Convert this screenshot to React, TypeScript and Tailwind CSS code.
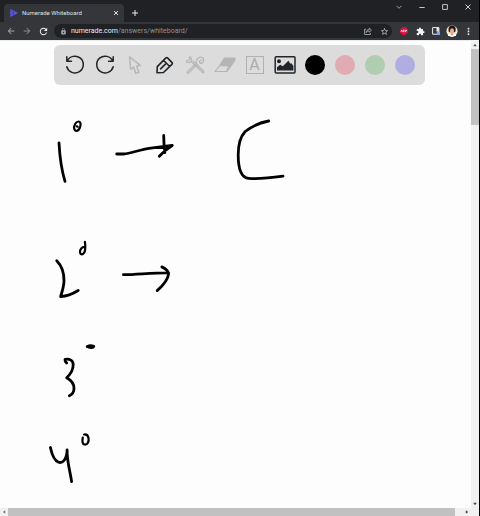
import type { ReactNode } from "react";
import {
  MdArrowBack,
  MdArrowForward,
  MdExtension,
  MdLock,
  MdMoreVert,
  MdRefresh,
  MdStarBorder,
} from "react-icons/md";

const colors = [
  { name: "Black", className: "bg-black" },
  { name: "Red", className: "bg-[#e0abb3]" },
  { name: "Green", className: "bg-[#b1cdb1]" },
  { name: "Blue", className: "bg-[#b0aee0]" },
];

const IconButton = ({
  label,
  className,
  children,
}: {
  label: string;
  className: string;
  children: ReactNode;
}) => (
  <button
    type="button"
    aria-label={label}
    className={`flex shrink-0 items-center justify-center ${className}`}
  >
    {children}
  </button>
);

const ToolIcon = ({ children, muted }: { children: ReactNode; muted?: boolean }) => (
  <svg
    viewBox="0 0 20 20"
    fill="none"
    stroke="currentColor"
    strokeWidth="1.5"
    strokeLinecap="round"
    strokeLinejoin="round"
    className={`h-5 w-5 overflow-visible ${muted ? "text-[#b7b7b7]" : "text-[#212529]"}`}
  >
    {children}
  </svg>
);

const TabStrip = () => (
  <div className="flex h-[22px] items-end bg-[#202124] pl-1">
    <div className="flex h-[18px] w-30 items-center rounded-t bg-[#35363a] pr-[2px] pl-[6px]">
      <svg viewBox="0 0 8 8" className="h-2 w-2 shrink-0">
        <path d="M.3 0 8 4 .3 8z" fill="#5f5ae8" />
        <path d="M.5 2.2 4 4 .5 5.8M3 1.5l1 2.5-1 2.5" stroke="#3a35a8" strokeWidth=".6" fill="none" />
      </svg>
      <span className="ml-1 flex-1 text-[6px] leading-2 whitespace-nowrap text-[#dfe1e5]">
        Numerade Whiteboard
      </span>
      <IconButton label="Close tab" className="h-3 w-3">
        <svg viewBox="0 0 6 6" className="h-[6px] w-[6px]">
          <path d="M1 1l4 4M5 1 1 5" stroke="#dfe1e5" strokeWidth="1" />
        </svg>
      </IconButton>
    </div>
    <IconButton label="New tab" className="ml-1 h-[18px] w-[14px]">
      <svg viewBox="0 0 6 6" className="h-[6px] w-[6px]">
        <path d="M3 0v6M0 3h6" stroke="#e8eaed" strokeWidth="1" />
      </svg>
    </IconButton>
    <div className="mb-2 ml-auto flex h-[14px]">
      <IconButton label="Search tabs" className="w-[23px]">
        <svg viewBox="0 0 6 6" className="h-[6px] w-[6px]">
          <path d="M.5 1.8 3 4.3l2.5-2.5" stroke="#a9abae" strokeWidth=".9" fill="none" />
        </svg>
      </IconButton>
      <IconButton label="Minimize" className="w-[23px]">
        <svg viewBox="0 0 6 6" className="h-[6px] w-[6px]">
          <path d="M.3 3.5h5.4" stroke="#d5d6d8" strokeWidth=".9" />
        </svg>
      </IconButton>
      <IconButton label="Maximize" className="w-[23px]">
        <svg viewBox="0 0 6 6" className="h-[6px] w-[6px]">
          <path d="M.6.6h4.8v4.8H.6z" stroke="#d5d6d8" strokeWidth=".9" fill="none" />
        </svg>
      </IconButton>
      <IconButton label="Close" className="w-[23px]">
        <svg viewBox="0 0 6 6" className="h-[6px] w-[6px]">
          <path d="M.5.5l5 5M5.5.5l-5 5" stroke="#e2e3e5" strokeWidth=".9" />
        </svg>
      </IconButton>
    </div>
  </div>
);

const AddressBar = () => (
  <div className="flex h-[18px] items-center bg-[#35363a] px-[3px] text-[#dfe1e5]">
    <IconButton label="Back" className="h-4 w-4 text-[#a5a7aa]">
      <MdArrowBack size={10} />
    </IconButton>
    <IconButton label="Forward" className="h-4 w-4 text-[#8b8d91]">
      <MdArrowForward size={10} />
    </IconButton>
    <IconButton label="Reload" className="h-4 w-4 text-[#f1f3f4]">
      <MdRefresh size={11} />
    </IconButton>
    <div className="ml-[3px] flex h-[14px] flex-1 items-center rounded-full bg-[#202124] pl-[6px]">
      <MdLock size={7} className="text-[#9aa0a6]" />
      <div
        role="textbox"
        aria-label="Address"
        className="ml-1 flex-1 text-[7px] leading-[10px] whitespace-nowrap text-[#8f9397]"
      >
        <span className="text-[#e8eaed]">numerade.com</span>/answers/whiteboard/
      </div>
      <IconButton label="Share" className="h-[14px] w-4 text-[#b5b8bc]">
        <svg viewBox="0 0 8 8" className="h-2 w-2" fill="none" stroke="currentColor" strokeWidth=".8">
          <path d="M2.2 2.3H.6v5.2h5.8V6M2.2 5.6c.1-2 1.2-3 3-3V1l2.2 2.2-2.2 2V4c-1.3 0-2.3.4-3 1.6z" />
        </svg>
      </IconButton>
      <IconButton label="Bookmark" className="h-[14px] w-4 text-[#c8cacd]">
        <MdStarBorder size={9} />
      </IconButton>
    </div>
    <IconButton label="Adblock Plus" className="ml-1 h-4 w-4">
      <svg viewBox="0 0 8 8" className="h-2 w-2">
        <path d="M2.4 0h3.2L8 2.4v3.2L5.6 8H2.4L0 5.600V2.4z" fill="#d3123f" />
        <path d="M1 5l.8-2 .6 2M3.4 3v2h.9l-.5-1 .5-1zM5.6 5V3h.9v1h-.9" stroke="#fff" strokeWidth=".6" fill="none" />
      </svg>
    </IconButton>
    <IconButton label="Extensions" className="h-4 w-4 text-[#f1f3f4]">
      <MdExtension size={9} />
    </IconButton>
    <IconButton label="Side panel" className="h-4 w-4">
      <svg viewBox="0 0 8 8" className="h-2 w-2">
        <path d="M.6.6h6.300v6.600H.6z" fill="none" stroke="#e8eaed" strokeWidth="1" />
        <path d="M4.500.6h2.400v4H4.500z" fill="#e8eaed" />
        <path d="M4.800 4.800H8V8H4.800z" fill="#7aa7f0" />
      </svg>
    </IconButton>
    <IconButton label="Profile" className="h-4 w-4">
      <svg viewBox="0 0 12 12" className="h-3 w-3 overflow-hidden rounded-full">
        <circle cx="6" cy="6" r="5.7" fill="#efe5da" />
        <path d="M1.500 11c.4-2 2-2.600 4.500-2.600s4.100.6 4.500 2.600L6 12z" fill="#fff" />
        <path d="M2.700 6.500C1.900 2.600 3.600.6 6.100.6s4.300 2 3.300 5.900l-1 .8H3.600z" fill="#2a1712" />
        <path d="M4.800 7h2.400v2.500L6 10.800 4.800 9.500z" fill="#d79b74" />
        <ellipse cx="6" cy="5.900" rx="2.100" ry="2.600" fill="#e8b48e" />
      </svg>
    </IconButton>
    <IconButton label="Menu" className="h-4 w-4">
      <MdMoreVert size={11} />
    </IconButton>
  </div>
);

const Toolbar = () => (
  <div className="relative mx-auto flex h-10 w-full max-w-[371px] items-center justify-center rounded-md bg-[#dcdcdc]">
    <IconButton label="Undo" className="h-10 w-[30px]">
      <ToolIcon>
        <path d="M2.2 6.200A8.400 8.400 0 1 1 1.800 11.800M1.800 1.700v4.500h4.600" />
      </ToolIcon>
    </IconButton>
    <IconButton label="Redo" className="h-10 w-[30px]">
      <ToolIcon>
        <path d="M17.800 6.200A8.400 8.400 0 1 0 18.200 11.800M18.200 1.700v4.500h-4.600" />
      </ToolIcon>
    </IconButton>
    <IconButton label="Select" className="h-10 w-[30px]">
      <ToolIcon muted>
        <path d="M4.600 1.800 5.600 14.300l3-2.200 2.200 6.300 3.200-1.200-2.400-6 3.700-.9z" />
      </ToolIcon>
    </IconButton>
    <IconButton label="Pen" className="h-10 w-[30px]">
      <ToolIcon>
        <path
          d="M2 17.800l.3-6.200 8.600-8.700q.8-.7 1.600 0l4.600 4.700q.7.800 0 1.600l-8.600 8.300zM8.400 5.300l6.300 6.200M10.400 9.200l-4.800 4.600"
          strokeWidth="1.600"
        />
      </ToolIcon>
    </IconButton>
    <IconButton label="Tools" className="h-10 w-[30px]">
      <ToolIcon muted>
        <path d="M1.300 6.800c1.700 1.300 3.500 1 4.600-.4 1-1.500.8-3.200-1-4.600M4.200 2l.3 2.800-3 .9M6.500 7l11 10.400c.9.900 2-.1 1.200-1.100L8 6" strokeWidth="1.200" />
        <path d="M12.300 9.300 3.600 18c-.9.800-2.100-.3-1.200-1.300l8.900-8.600M11.500 8.300c-.6-2.300.2-4 1.800-5.200 1.400-1.100 3.100-1.200 4.700-.4l.8 2.500c-.3 2.200-1.700 3.300-3.500 3.200l-1.200-2 2.400-1.600" strokeWidth="1.200" />
      </ToolIcon>
    </IconButton>
    <IconButton label="Eraser" className="h-10 w-[30px]">
      <svg
        viewBox="0 0 22 20"
        className="h-5 w-[22px] text-[#b5b5b5]"
        stroke="currentColor"
        strokeWidth="1.200"
        strokeLinejoin="round"
      >
        <path d="M5.700 10.600 10.300 3.200h10.900l-5.700 9.600-1-2.200z" fill="currentColor" />
        <path d="M5.700 10.600 1 16.500h11.900l8.300-11.700M14.500 10.600l-1.800 5.800" fill="none" />
      </svg>
    </IconButton>
    <IconButton label="Text" className="h-10 w-[30px]">
      <span className="flex h-[18px] w-[18px] items-center justify-center border border-[#b0b0b0] text-[16px] leading-4 text-[#acacac]">
        A
      </span>
    </IconButton>
    <IconButton label="Image" className="h-10 w-[30px]">
      <svg viewBox="0 0 22 20" className="h-5 w-[22px] text-[#212529]">
        <rect x="1.200" y="1.800" width="19.800" height="16.200" rx="1" fill="none" stroke="currentColor" strokeWidth="1.500" />
        <circle cx="5" cy="6.300" r="2" fill="currentColor" />
        <path d="M3 15.600v-3.400l3.200-2.400 2.600 1.500 5.600-5.500 2 2.900 1.100-.5 1.900 2.900v4.500z" fill="currentColor" />
      </svg>
    </IconButton>
    {colors.map((color) => (
      <IconButton key={color.name} label={color.name} className="h-10 w-[30px]">
        <span className={`h-5 w-5 rounded-full ${color.className}`} />
      </IconButton>
    ))}
  </div>
);

// Pen strokes, drawn under the toolbar
const Drawing = () => (
  <svg
    viewBox="0 41 471 467"
    width="471"
    height="467"
    className="absolute top-0 left-0"
    fill="none"
    stroke="#000"
    strokeWidth="2.8"
    strokeLinecap="round"
    strokeLinejoin="round"
  >
    <path d="M59 143c.8 15 2.500 27 6 38.300" />
    <path d="M78.500 121.500c-3 .2-5 4.500-4.200 7.500.8 3.200 4.300 2.200 5.700-1.500 1-3 .8-6.200-1.500-6M76.800 126.300l.8.400" strokeWidth="2.200" />
    <path d="M116.700 154h7c8-.6 16-4.700 29-6.200l19.300-2.300M163.700 135.500c.2 6 .2 11 1.200 17M172.300 145.500c-5 3-9 6.300-13 10.800" />
    <path d="M268.700 121c-9 1.500-17 5.500-23.500 10.500-5.200 5.500-7 14.500-7 23.500 0 12.500 3 22.700 10.500 23.400 9.500.8 21.500-.4 34.300-2.200" />
    <path d="M56.700 260.700c5.500 5.500 7.500 13 7.300 20.500-.2 5.500-1.800 10.300-3.400 15.400 6.400-.4 11.900-2.600 17.600-6.100" />
    <path d="M84.900 241.800c.6 4 .7 8-.6 10.800-1.300 2.400-4 2.200-4.300-.3-.3-3 2-5.600 4.800-5.300" strokeWidth="2.200" />
    <path d="M123.400 274.700c14-.2 28-1.900 43.500-1.900M161.800 266.900c3.600 1.600 6 3.700 6.900 6.500-.7 6.300-5 11.600-11.500 17.200" />
    <path d="M66.700 363c-1-1-1.900-2.500-1.700-3.600 4-.9 8 .5 8.200 5 .1 5-3.200 10.300-6.500 13.400 4 2.200 7.400 5.800 7.300 10.700-.1 3.700-1.700 6-4.600 7.200" />
    <path d="M87.300 346.600c2-1 4.200-1.100 6.500-.2-.5 1.300-4.200 1.600-6.500.2" />
    <path d="M50.400 447.500c1.400 6.500 3.600 13 8.100 14.700 4.600 1.600 8.400-3.400 8.600-12.200-.3 11 3 21 4.500 31.600" />
    <path d="M82.800 437.500c-.7 3.700-.6 6.600 1.800 7 3 .4 4.600-3 3.900-6.500-.5-2.500-1.800-3.900-4.400-3.500" strokeWidth="2.200" />
  </svg>
);

const App = () => {
  return (
    <div className="flex min-h-screen flex-col border-r border-black bg-[#fdfdfd] font-[Roboto,sans-serif]">
      <header>
        <TabStrip />
        <AddressBar />
      </header>
      <div className="flex flex-1">
        <main className="relative min-h-[468px] flex-1 overflow-hidden border-t border-[#ececec] pt-1 pl-2">
          <Drawing />
          <Toolbar />
        </main>
        <div className="flex w-2 flex-col bg-[#f1f1f1]">
          <IconButton label="Scroll up" className="h-[9px] w-2">
            <svg viewBox="0 0 4 4" className="h-1 w-1">
              <path d="M2 .8 3.800 3.200H.2z" fill="#555" />
            </svg>
          </IconButton>
          <div className="h-[76px] bg-[#c1c1c1]" />
          <IconButton label="Scroll down" className="mt-auto h-[9px] w-2">
            <svg viewBox="0 0 4 4" className="h-1 w-1">
              <path d="M2 3.200.2.800h3.600z" fill="#444" />
            </svg>
          </IconButton>
        </div>
      </div>
      <div className="flex h-2 bg-[#f1f1f1] pr-2">
        <IconButton label="Scroll left" className="h-2 w-2">
          <svg viewBox="0 0 4 4" className="h-1 w-1">
            <path d="M.8 2 3.200.2v3.600z" fill="#777" />
          </svg>
        </IconButton>
        <div className="mr-2 flex-1 bg-[#c1c1c1]" />
        <IconButton label="Scroll right" className="h-2 w-2">
          <svg viewBox="0 0 4 4" className="h-1 w-1">
            <path d="M3.200 2 .8.2v3.600z" fill="#444" />
          </svg>
        </IconButton>
      </div>
    </div>
  );
};

export default App;
